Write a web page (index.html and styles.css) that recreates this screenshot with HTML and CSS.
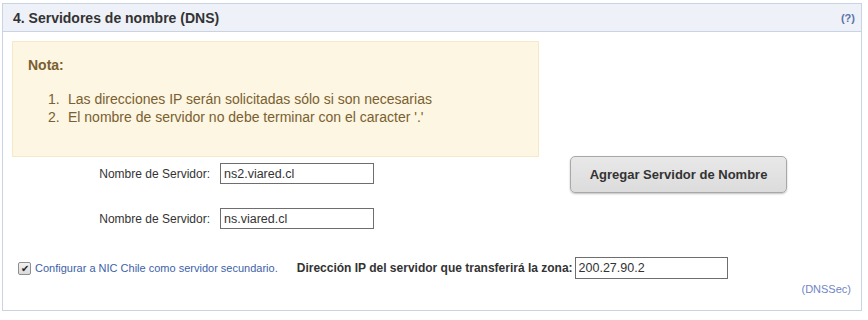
FILE: index.html
```html
<!DOCTYPE html>
<html>
<head>
<meta charset="utf-8">
<link rel="stylesheet" href="styles.css">
</head>
<body>
<div class="panel">
  <div class="panel-head">
    <span class="title">4. Servidores de nombre (DNS)</span>
    <a class="help">(?)</a>
  </div>
  <div class="panel-body">
    <div class="note">
      <div class="note-title">Nota:</div>
      <ol class="note-list">
        <li>Las direcciones IP serán solicitadas sólo si son necesarias</li>
        <li>El nombre de servidor no debe terminar con el caracter '.'</li>
      </ol>
    </div>
    <div class="servers">
      <div class="rows">
        <div class="row"><label class="lbl">Nombre de Servidor:</label><input class="field" type="text" value="ns2.viared.cl"></div>
        <div class="row"><label class="lbl">Nombre de Servidor:</label><input class="field" type="text" value="ns.viared.cl"></div>
      </div>
      <button class="btn">Agregar Servidor de Nombre</button>
    </div>
    <div class="secondary">
      <label class="chk"><input type="checkbox" checked><span class="box">✔</span><span>Configurar a NIC Chile como servidor secundario.</span></label>
      <span class="ip-lbl">Dirección IP del servidor que transferirá la zona:</span>
      <input class="field ip" type="text" value="200.27.90.2">
    </div>
    <div class="foot"><a class="dnssec">(DNSSec)</a></div>
  </div>
</div>
</body>
</html>
```
FILE: styles.css
```css
html, body { margin: 0; padding: 0; background: #fff; }
body { font-family: "Liberation Sans", Arial, sans-serif; color: #333; }
.panel {
  margin: 3px 0 0 2px;
  width: 860px;
  height: 308px;
  border: 1px solid #c8d3e4;
  box-sizing: border-box;
}
.panel-head {
  height: 26px;
  background: #eef1f7;
  border-bottom: 1px solid #c8d3e4;
  display: flex;
  align-items: center;
  justify-content: space-between;
  padding: 1px 6px 0 10px;
}
.title { font-weight: bold; font-size: 14px; color: #333; }
.help { font-weight: bold; font-size: 11px; color: #5b74ad; }
.panel-body { padding: 9px 0 0 9px; }
.note {
  width: 527px;
  height: 116px;
  box-sizing: border-box;
  background: #fcf6e3;
  border: 1px solid #f5e9c9;
  padding: 15px 0 0 15px;
  color: #7a6030;
}
.note-title { font-weight: bold; font-size: 14px; }
.note-list { margin: 17px 0 0 0; padding-left: 20px; font-size: 14px; line-height: 18px; list-style: none; counter-reset: n; }
.note-list li { counter-increment: n; }
.note-list li::before { content: counter(n) "."; display: inline-block; width: 20px; }
.servers { display: flex; align-items: flex-start; }
.rows { width: 558px; display: flex; flex-direction: column; gap: 24px; padding-top: 6px; }
.row { display: flex; align-items: center; }
.lbl { width: 208px; text-align: right; padding-right: 10px; box-sizing: border-box; font-size: 12px; color: #333; }
.field {
  width: 154px;
  height: 21px;
  box-sizing: border-box;
  border: 1px solid #6e6e6e;
  font-family: "Liberation Sans", Arial, sans-serif;
  font-size: 12.5px;
  color: #333;
  padding: 1px 3px;
  margin: 0;
}
.btn {
  margin-top: -1px;
  width: 217px;
  height: 37px;
  border: 1px solid #a8a8a8;
  border-radius: 5px;
  background: linear-gradient(#e8e8e8, #dcdcdc);
  box-shadow: 0 1px 2px rgba(0,0,0,0.25);
  font-family: "Liberation Sans", Arial, sans-serif;
  font-weight: bold;
  font-size: 13px;
  color: #333;
}
.secondary { display: flex; align-items: center; margin-top: 28px; padding-left: 5px; }
.chk { display: flex; align-items: center; font-size: 11px; color: #3d5fa8; }
.chk input { display: none; }
.box {
  width: 13px; height: 13px;
  box-sizing: border-box;
  border: 1px solid #8e8e8e;
  border-radius: 2px;
  background: linear-gradient(#f2f2f2, #dadada);
  color: #222;
  font-size: 10px;
  line-height: 11px;
  text-align: center;
  margin: 0 4px 0 1px;
}
.ip-lbl { margin-left: 19px; font-weight: bold; font-size: 12px; color: #333; margin-right: 2px; }
.ip { height: 22px; width: 153px; }
.foot { display: flex; justify-content: flex-end; padding-right: 10px; margin-top: 4px; }
.dnssec { font-size: 11px; color: #6f86c4; }
```
